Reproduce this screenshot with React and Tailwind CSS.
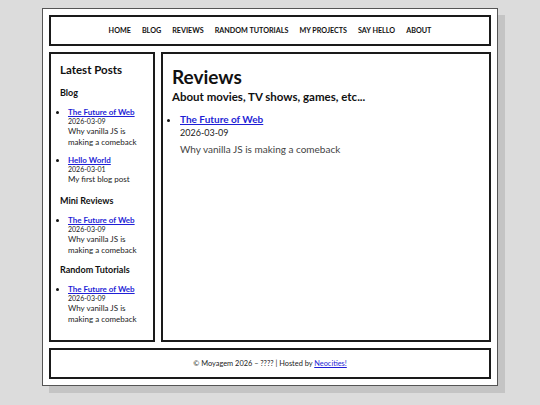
import React from 'react';

const navLinks = ['Home', 'Blog', 'Reviews', 'Random Tutorials', 'My Projects', 'Say Hello', 'About'];

const sections = [
  {
    title: 'Blog',
    pad: '',
    posts: [
      { title: 'The Future of Web', date: '2026-03-09', desc: 'Why vanilla JS is making a comeback' },
      { title: 'Hello World', date: '2026-03-01', desc: 'My first blog post' },
    ],
  },
  {
    title: 'Mini Reviews',
    pad: 'pt-[3px]',
    posts: [{ title: 'The Future of Web', date: '2026-03-09', desc: 'Why vanilla JS is making a comeback' }],
  },
  {
    title: 'Random Tutorials',
    pad: 'pt-[1px]',
    posts: [{ title: 'The Future of Web', date: '2026-03-09', desc: 'Why vanilla JS is making a comeback' }],
  },
];

const SidePost = ({ post }) => (
  <li className="mb-[7px] text-[8px] leading-[10px]">
    <a href="#" className="font-bold text-[#1f1fd6] underline">
      {post.title}
    </a>
    <div className="text-[7px] leading-[9px] text-[#222]">{post.date}</div>
    <div className="text-[8px] leading-[11px] text-[#222]">{post.desc}</div>
  </li>
);

const App = () => {
  return (
    <div
      className="min-h-[405px] bg-[#dcdcdc] pt-[8px]"
      style={{ fontFamily: 'Lato, "Noto Sans", sans-serif' }}
    >
      <div className="w-[456px] mx-auto bg-white border border-[#555] shadow-[7px_7px_0_#c4c4c4] p-[6px] flex flex-col gap-[6px]">
        <nav className="h-[31px] border-2 border-[#1a1a1a] pt-[2px] flex items-center justify-center gap-[11px]">
          {navLinks.map((l) => (
            <a key={l} href="#" className="text-[7.2px] font-bold uppercase text-[#111]">
              {l}
            </a>
          ))}
        </nav>

        <div className="flex gap-[6px] h-[290px]">
          <aside className="w-[106px] border-2 border-[#1a1a1a] px-[9px] pt-[8px] text-[#111]">
            <h2 className="text-[11.5px] leading-[15px] font-bold mb-[10px]">Latest Posts</h2>
            {sections.map((s) => (
              <div key={s.title} className={s.pad}>
                <h3 className="text-[9px] leading-[12px] font-bold mb-[8px]">{s.title}</h3>
                <ul className="list-disc pl-[8px]">
                  {s.posts.map((p, i) => (
                    <SidePost key={i} post={p} />
                  ))}
                </ul>
              </div>
            ))}
          </aside>

          <main className="flex-1 border-2 border-[#1a1a1a] px-[9px] pt-[11px] text-[#111]">
            <h1 className="text-[19px] leading-[24px] font-bold">Reviews</h1>
            <h2 className="text-[11.5px] leading-[16px] font-bold mb-[8px]">About movies, TV shows, games, etc...</h2>
            <ul className="list-disc pl-[8px]">
              <li className="text-[10px] leading-[13px]">
                <a href="#" className="font-bold text-[#1f1fd6] underline">
                  The Future of Web
                </a>
                <div className="text-[9px] leading-[13px] text-[#222]">2026-03-09</div>
                <div className="text-[10px] leading-[14px] text-[#444] mt-[3px]">Why vanilla JS is making a comeback</div>
              </li>
            </ul>
          </main>
        </div>

        <footer className="h-[31px] border-2 border-[#1a1a1a] flex items-center justify-center text-[7.4px] text-[#222]">
          <span>
            © Moyagem 2026 – ???? | Hosted by{' '}
            <a href="#" className="text-[#1f1fd6] underline">
              Neocities!
            </a>
          </span>
        </footer>
      </div>
    </div>
  );
};

export default App;
